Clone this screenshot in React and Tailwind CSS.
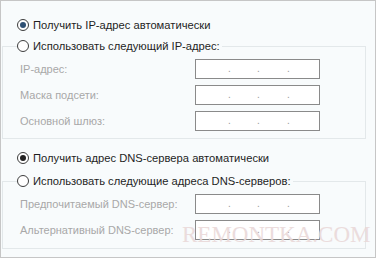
import React from "react";

function Radio({ checked, dot = "bg-[#2d4f73]" }) {
  return (
    <span className="flex h-[12px] w-[12px] shrink-0 items-center justify-center rounded-full border border-[#3c3c3c] bg-white">
      {checked && <span className={`h-[6px] w-[6px] rounded-full ${dot}`} />}
    </span>
  );
}

function RadioRow({ checked, dot, children }) {
  return (
    <div className="flex h-[16px] items-center gap-[4px] whitespace-nowrap text-[11.2px] leading-[16px] text-[#1e1e1e]">
      <Radio checked={checked} dot={dot} />
      <span>{children}</span>
    </div>
  );
}

function IpBox() {
  return (
    <div className="flex h-[20px] w-[125px] shrink-0 items-center border border-[#8a8a8a] bg-white pl-[32px] text-[10px] leading-none text-[#9a9a9a]">
      <span className="w-[29px]">.</span>
      <span className="w-[30px]">.</span>
      <span>.</span>
    </div>
  );
}

function Field({ label }) {
  return (
    <div className="flex h-[20px] items-center">
      <span className="w-[192px] shrink-0 whitespace-nowrap pl-[17px] text-[11px] text-[#a8a8a8]">{label}</span>
      <IpBox />
    </div>
  );
}

export default function App() {
  return (
    <div
      className="relative h-[258px] w-[376px] overflow-hidden border border-[#c6c6c6] bg-[#f8fbfc]"
      style={{ fontFamily: '"Liberation Sans", Arial, sans-serif' }}
    >
      <div className="pl-[16px] pt-[16px]">
        <RadioRow checked>Получить IP-адрес автоматически</RadioRow>
      </div>

      <fieldset className="ml-[1px] mt-[5px] w-[364px] border border-[#e3e8ea] pb-[7px]">
        <legend className="ml-[14px] pr-[2px]">
          <RadioRow>Использовать следующий IP-адрес:</RadioRow>
        </legend>
        <div className="mt-[5px] flex flex-col gap-[6px]">
          <Field label="IP-адрес:" />
          <Field label="Маска подсети:" />
          <Field label="Основной шлюз:" />
        </div>
      </fieldset>

      <div className="pl-[16px] pt-[11px]">
        <RadioRow checked dot="bg-[#222]">Получить адрес DNS-сервера автоматически</RadioRow>
      </div>

      <fieldset className="ml-[1px] mt-[7px] w-[364px] border border-[#e3e8ea] pb-[8px]">
        <legend className="ml-[14px] pr-[2px]">
          <RadioRow>Использовать следующие адреса DNS-серверов:</RadioRow>
        </legend>
        <div className="mt-[5px] flex flex-col gap-[6px]">
          <Field label="Предпочитаемый DNS-сервер:" />
          <Field label="Альтернативный DNS-сервер:" />
        </div>
      </fieldset>

      <div
        className="pointer-events-none absolute left-[181px] top-[222px] text-[23px] leading-[23px] text-[#ead9d9] opacity-90"
        style={{ fontFamily: '"Liberation Serif", "Times New Roman", serif' }}
      >
        REMONTKA.COM
      </div>
    </div>
  );
}
